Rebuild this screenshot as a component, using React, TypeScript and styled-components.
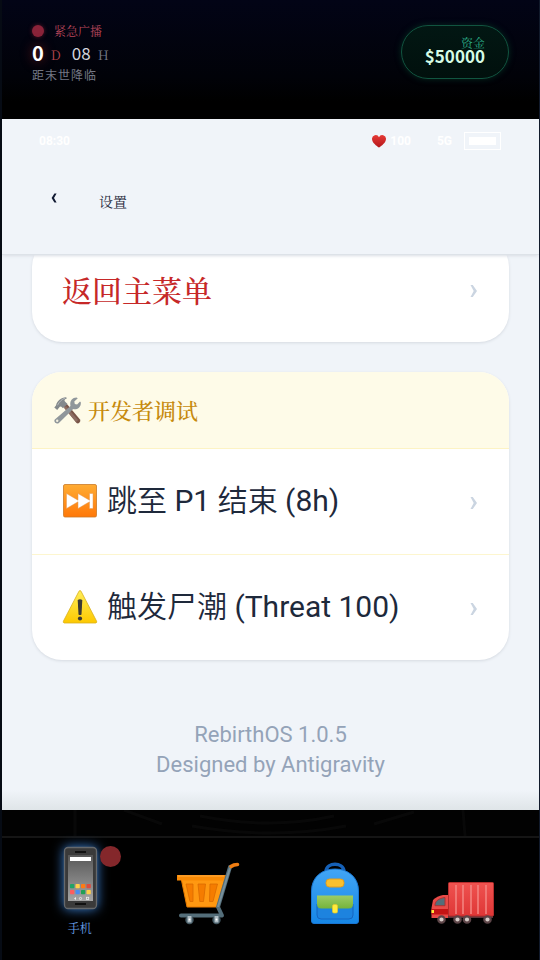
import React from 'react';
import styled, { createGlobalStyle } from 'styled-components';

const serif = '"Noto Serif CJK SC", "Noto Sans CJK SC", serif';
const sans = 'Roboto, "Noto Sans CJK SC DemiLight", "Noto Sans CJK SC", sans-serif';
const digits = '"Noto Sans CJK SC", sans-serif';

const GlobalStyle = createGlobalStyle`
  * { box-sizing: border-box; }
  body { margin: 0; background: #000; }
  button { font: inherit; color: inherit; border: 0; background: none; padding: 0; cursor: pointer; }
  svg { display: block; flex: none; }
`;

const Page = styled.div`
  display: flex;
  flex-direction: column;
  height: 100vh;
  border-left: 2px solid #060b14;
  border-right: 1px solid #111a2b;
  background: #000;
  font-family: ${sans};
`;

const TopBar = styled.header`
  display: flex;
  justify-content: space-between;
  align-items: flex-start;
  padding: 20px 30px 33px;
  background: linear-gradient(#020416, #010208 65%, #000 85%);
`;

const Countdown = styled.div`
  display: flex;
  flex-direction: column;
`;

const CountLine = styled.div`
  display: flex;
  align-items: center;
  height: 22px;
`;

const AlertDot = styled.span`
  width: 12px;
  height: 12px;
  margin-right: 10px;
  border-radius: 50%;
  background: #8a2339;
  box-shadow: 0 0 4px #5a1526;
`;

const AlertText = styled.span`
  font: 12px/22px ${serif};
  color: #b8465b;
`;

const Count = styled.span<{ $strong?: boolean }>`
  font: ${(p) => (p.$strong ? '700 20px' : '400 17px')}/22px ${digits};
  color: ${(p) => (p.$strong ? '#fff' : '#d3d5dc')};
  text-shadow: ${(p) => (p.$strong ? '0 0 12px #7f1d1d' : 'none')};
`;

const Unit = styled.span<{ $color: string }>`
  margin: 4px 11px 0 7px;
  font: 13px/18px ${serif};
  color: ${(p) => p.$color};
`;

const Caption = styled.span`
  font: 12px/22px ${digits};
  letter-spacing: 1px;
  color: #737884;
`;

const Funds = styled.div`
  display: flex;
  flex-direction: column;
  align-items: flex-end;
  justify-content: center;
  height: 54px;
  margin-top: 5px;
  padding: 0 23px 4px;
  border: 1px solid #115540;
  border-radius: 27px;
  background: linear-gradient(#021713, #01100d);
  box-shadow: 0 0 6px #05291f;
`;

const FundsLabel = styled.span`
  font: 12px/12px ${serif};
  color: #2bab85;
`;

const FundsValue = styled.span`
  font: 700 17px/14px ${digits};
  color: #d5fbe6;
`;

const Phone = styled.main`
  display: flex;
  flex-direction: column;
  flex: 1;
  min-height: 0;
  overflow: hidden;
  background: linear-gradient(transparent calc(100% - 20px), #dfe5e8), #f0f4f9;
`;

const StatusBar = styled.div`
  display: flex;
  align-items: center;
  height: 44px;
  padding: 0 38px 0 37px;
  font: 700 12px/16px ${sans};
  color: #fff;
`;

const Health = styled.span`
  display: flex;
  align-items: center;
  gap: 4px;
  margin-left: auto;
`;

const Network = styled.span`
  margin: 0 12px 0 26px;
`;

const Battery = styled.span`
  width: 37px;
  height: 18px;
  padding: 4px;
  border: 1px solid #fff;

  &::before {
    content: '';
    display: block;
    height: 8px;
    background: #fff;
  }
`;

const TitleBar = styled.div`
  display: flex;
  align-items: center;
  height: 92px;
  padding: 0 30px 15px;
  border-bottom: 1px solid #dde2e8;
  box-shadow: 0 2px 3px -1px #d9dee4;
  z-index: 1;
`;

const BackButton = styled.button`
  display: flex;
  justify-content: center;
  width: 44px;
  padding-bottom: 6px;
`;

const Title = styled.h1`
  margin: 0 0 0 23px;
  font: 400 14px/20px ${serif};
  color: #1e293b;
`;

const Content = styled.div`
  display: flex;
  flex: 1;
  flex-direction: column;
  justify-content: flex-end;
  gap: 30px;
  min-height: 0;
  overflow: hidden;
  padding: 0 30px;
`;

const Card = styled.section`
  flex: none;
  overflow: hidden;
  border-radius: 30px;
  background: #fff;
  box-shadow: 0 1px 3px #d5dae1;
`;

const DevHeading = styled.h2`
  display: flex;
  align-items: center;
  gap: 7px;
  height: 77px;
  margin: 0;
  padding: 0 22px;
  border-bottom: 1px solid #fdf3c4;
  background: #fefbe8;
  font: 500 22px/30px ${serif};
  color: #c68a0c;
`;

const Row = styled.button<{ $danger?: boolean }>`
  display: flex;
  align-items: center;
  gap: 9px;
  width: 100%;
  height: 105px;
  padding: 0 30px;
  font: ${(p) => (p.$danger ? 500 : 400)} 30px/44px ${(p) => (p.$danger ? serif : sans)};
  color: ${(p) => (p.$danger ? '#c62828' : '#1e293b')};
  text-align: left;

  & + & {
    height: 106px;
    border-top: 1px solid #fdf6cf;
  }
`;

const RowLabel = styled.span`
  flex: 1;
  padding-bottom: 2px;
`;

const About = styled.footer`
  flex: none;
  padding: 30px 0;
  font: 22px/30px ${sans};
  color: #94a3b8;
  text-align: center;

  p { margin: 0; }
`;

const Dock = styled.nav`
  display: grid;
  grid-template-columns: repeat(4, 1fr);
  height: 124px;
  padding: 8px 12px 0 14px;
  border-top: 2px solid #151515;
  background: #000;
`;

const Floor = styled.div`
  height: 26px;
  background: #020202;

  svg { width: 100%; height: 26px; }
`;

const DockItem = styled.button<{ $active?: boolean }>`
  display: flex;
  flex-direction: column;
  align-items: center;
  gap: 9px;
  padding-top: ${(p) => (p.$active ? '0' : '15px')};
  font: 12px/18px ${serif};
  color: #69a0e8;

  svg { filter: ${(p) => (p.$active ? 'drop-shadow(0 0 6px #3b82d6)' : 'none')}; }
`;

const IconWrap = styled.span`
  position: relative;
`;

const Badge = styled.span`
  position: absolute;
  top: 0;
  right: -9px;
  width: 21px;
  height: 21px;
  border-radius: 50%;
  background: #84272b;
`;

const Chevron = () => (
  <svg width="10" height="16" viewBox="0 0 10 16" aria-hidden="true">
    <path d="M1.500 3h2.300l4.200 6-4.200 6H1.500l3.200-6z" fill="#cbd5e1" />
  </svg>
);

const BackIcon = () => (
  <svg width="6" height="10" viewBox="0 0 6 10" aria-hidden="true">
    <path d="M3.400 0.500h2.200L3 5l2.600 4.500H3.400L.6 5z" fill="#111a33" />
  </svg>
);

const Heart = () => (
  <svg width="14" height="13" viewBox="0 0 14 13" aria-hidden="true">
    <defs>
      <linearGradient id="heart" x1="0" y1="0" x2="0" y2="1">
        <stop stopColor="#e53935" /><stop offset="1" stopColor="#b3161b" />
      </linearGradient>
    </defs>
    <path d="M7 12.600C4.700 11 0 7.700 0 4A3.700 3.700 0 0 1 7 2.200 3.700 3.700 0 0 1 14 4c0 3.700-4.700 7-7 8.600z" fill="url(#heart)" />
  </svg>
);

const Tools = () => (
  <svg width="27" height="27" viewBox="0 0 27 27" aria-hidden="true">
    <path d="M9.500 9.500l3-3L26 22.500q1 1.500-.5 3t-3 .5z" fill="#795548" />
    <path d="M12 9l12 14-2 2L10 11z" fill="#8d6e63" />
    <path d="M.8 22.500L16.500 9C15.500 5 17.500.8 22.500.6l1.300.7-3.500 3.200.5 2.500 2.300.6L26 4.500l.8.8c.6 4.700-3.800 7.800-7.600 6.800L4.600 26.200C2 27.500-.8 24.500.8 22.500z" fill="#90979b" />
    <circle cx="3.200" cy="23.800" r="1.200" fill="#f4f1df" />
    <path d="M.3 10.500L2 8.500c1-4.500 5-8 10-8.200l1 1C10.500 2 10 3.500 11 4.500l2.500 2.500-4.500 4.200-2-1.700-1.200.2-2.600 3.300z" fill="#84898c" />
    <path d="M3.500 8.300C5 5 8 2 11 1.200" fill="none" stroke="#b4b8ba" strokeWidth="1" />
  </svg>
);

const SkipIcon = () => (
  <svg width="36" height="36" viewBox="0 0 36 36" aria-hidden="true">
    <defs>
      <linearGradient id="skip" x1="0" y1="0" x2="0" y2="1">
        <stop stopColor="#ffac33" /><stop offset="1" stopColor="#ff7808" />
      </linearGradient>
    </defs>
    <rect x="1.500" y=".5" width="33" height="32.500" rx="1.500" fill="url(#skip)" stroke="#cc7a26" strokeWidth=".8" />
    <path d="M4.500 9.500l11.500 6.700v-6.700l11.500 6.700V9.500H31v15h-3.500v-6.700L16 24.500v-6.700L4.500 24.500z" fill="#fff" stroke="#e39a5a" strokeWidth=".5" />
  </svg>
);

const WarningIcon = () => (
  <svg width="36" height="36" viewBox="0 0 36 36" aria-hidden="true">
    <defs>
      <linearGradient id="warn" x1="0" y1="0" x2="0" y2="1">
        <stop stopColor="#ffee58" /><stop offset="1" stopColor="#fdc800" />
      </linearGradient>
    </defs>
    <path d="M17 1.200q1-1.400 2 0l15.600 30q.6 1.500-1 1.800H2.400q-1.600-.3-1-1.800z" fill="url(#warn)" stroke="#d9b01c" strokeWidth=".8" />
    <path d="M15.700 10q2.300-1.600 4.600 0l-.8 14.500q-1.500 1.200-3 0z" fill="#3b3835" />
    <circle cx="18" cy="28.500" r="2.100" fill="#3b3835" />
  </svg>
);

const appTiles = ['#21a366', '#ffd04a', '#ff7a14', '#dd4b3e', '#ff5d5d', '#4a8cf0', '#21a055', '#ffd04a'];

const PhoneIcon = () => (
  <svg width="64" height="64" viewBox="0 0 64 64" aria-hidden="true">
    <defs>
      <linearGradient id="screen" x1="0" y1="0" x2="0" y2="1">
        <stop stopColor="#575757" /><stop offset="1" stopColor="#a5a5a5" />
      </linearGradient>
    </defs>
    <rect x="16.500" y="1.500" width="32" height="61" rx="3.500" fill="#3a3a3a" stroke="#66696c" strokeWidth="1.300" />
    <rect x="27" y="5" width="11" height="2" fill="#111" />
    <rect x="27" y="57" width="11" height="2" fill="#111" />
    <rect x="20" y="9" width="25" height="46" fill="url(#screen)" />
    <rect x="22" y="11" width="21" height="4" fill="#fff" />
    {appTiles.map((fill, i) => (
      <rect key={i} x={22 + (i % 4) * 5.500} y={i < 4 ? 38 : 44} width="4.300" height="4.300" rx=".8" fill={fill} />
    ))}
    <path d="M28 51v3l-2-1.500z" fill="#eee" />
    <circle cx="32.500" cy="52.500" r="1.100" fill="none" stroke="#eee" strokeWidth=".8" />
    <rect x="38.500" y="51.300" width="2.200" height="2.200" fill="none" stroke="#eee" strokeWidth=".8" />
  </svg>
);

const CartIcon = () => (
  <svg width="64" height="64" viewBox="0 0 64 64" aria-hidden="true">
    <path d="M5 17h44l-8 29H11z" fill="#ff9811" stroke="#e87a00" />
    <path d="M1 14h50l-1 5.500H1z" fill="#f98a05" />
    <path d="M2 15h46" stroke="#ffab40" />
    <path d="M10 23h7v17.500h-3zM22 23h7.500l-2 17.500h-3.700zM34 23h7.500L37 40.500h-3.500z" fill="#f57c00" stroke="#d96b00" strokeWidth=".8" />
    <path d="M54 6L42 46l4 8.500H5" fill="none" stroke="#546e7a" strokeWidth="4" strokeLinejoin="round" strokeLinecap="round" />
    <path d="M54 7L42 46" stroke="#78909c" strokeWidth="2" />
    <path d="M55 5.500c2-1.500 4-2 6.500-2" fill="none" stroke="#ef7d12" strokeWidth="3.600" strokeLinecap="round" />
    {[13.500, 40.500].map((x) => (
      <g key={x}>
        <circle cx={x} cy="59" r="4.200" fill="#455a64" />
        <rect x={x - 2} y="55" width="4" height="6.500" fill="#b0bec5" />
        <circle cx={x} cy="58.500" r="1" fill="#fff" />
      </g>
    ))}
  </svg>
);

const BagIcon = () => (
  <svg width="64" height="64" viewBox="0 0 64 64" aria-hidden="true">
    <defs>
      <linearGradient id="bag" x1="0" y1="0" x2="0" y2="1">
        <stop stopColor="#42a5f5" /><stop offset="1" stopColor="#1687e7" />
      </linearGradient>
      <linearGradient id="flap" x1="0" y1="0" x2="0" y2="1">
        <stop stopColor="#9ccc65" /><stop offset="1" stopColor="#76b43c" />
      </linearGradient>
    </defs>
    <path d="M23 10c1-9 17-9 18 0" fill="none" stroke="#1560b7" strokeWidth="3.500" />
    <path d="M8.500 30C8.500 16 19 8 32 8s23.500 8 23.500 22v30q0 2.500-2.500 2.500H11q-2.500 0-2.500-2.500z" fill="url(#bag)" stroke="#1976d2" />
    <rect x="23" y="18" width="18" height="8" rx="3.500" fill="#fbc02d" stroke="#df9d20" />
    <path d="M14 43h36v11q0 4-4 4H18q-4 0-4-4z" fill="#1d83df" stroke="#1565c0" />
    <path d="M14 34.500h36V43q0 4.500-4.500 4.500h-27Q14 47.500 14 43z" fill="url(#flap)" />
    <rect x="29.500" y="43.500" width="5" height="8.500" rx="1.500" fill="#ffeb3b" stroke="#e5c52b" strokeWidth=".7" />
  </svg>
);

const TruckIcon = () => (
  <svg width="64" height="64" viewBox="0 0 64 64" aria-hidden="true">
    <defs>
      <linearGradient id="box" x1="0" y1="0" x2="0" y2="1">
        <stop stopColor="#ef5350" /><stop offset="1" stopColor="#df3636" />
      </linearGradient>
    </defs>
    <path d="M4 54h58v3H4z" fill="#5d3439" />
    <rect x="17.500" y="21.500" width="45" height="33.500" rx="1" fill="url(#box)" stroke="#b52d2d" />
    <path d="M25 24v29M32 24v29M40 24v29M47 24v29M55 24v29" stroke="#f48683" strokeWidth="1.500" />
    <path d="M17 34h-5Q6 35 2 39L.5 47v10H17z" fill="#e94a47" />
    <path d="M14 36.500v8.200H4c-.5-4 3.500-7.500 10-8.200z" fill="#546e7a" stroke="#a83434" />
    <path d="M.5 48H17v5.500H.5z" fill="#c41414" />
    <rect x=".5" y="49" width="2.500" height="3" fill="#ffeb3b" />
    {[10.500, 26.500, 36, 56.500].map((x) => (
      <circle key={x} cx={x} cy="58.500" r="3.200" fill="#d7ccc8" stroke="#5d4548" strokeWidth="2.200" />
    ))}
  </svg>
);

const devActions = [
  { icon: <SkipIcon />, label: '跳至 P1 结束 (8h)' },
  { icon: <WarningIcon />, label: '触发尸潮 (Threat 100)' },
];

const dockItems = [
  { name: '商城', icon: <CartIcon /> },
  { name: '背包', icon: <BagIcon /> },
  { name: '货车', icon: <TruckIcon /> },
];

export default function App() {
  return (
    <Page>
      <GlobalStyle />
      <TopBar>
        <Countdown>
          <CountLine><AlertDot /><AlertText>紧急广播</AlertText></CountLine>
          <CountLine>
            <Count $strong>0</Count><Unit $color="#b0434a">D</Unit>
            <Count>08</Count><Unit $color="#737884">H</Unit>
          </CountLine>
          <Caption>距末世降临</Caption>
        </Countdown>
        <Funds>
          <FundsLabel>资金</FundsLabel>
          <FundsValue>$50000</FundsValue>
        </Funds>
      </TopBar>

      <Phone>
        <StatusBar>
          <span>08:30</span>
          <Health><Heart />100</Health>
          <Network>5G</Network>
          <Battery />
        </StatusBar>
        <TitleBar>
          <BackButton aria-label="返回"><BackIcon /></BackButton>
          <Title>设置</Title>
        </TitleBar>
        <Content>
          <Card>
            <Row $danger><RowLabel>返回主菜单</RowLabel><Chevron /></Row>
          </Card>
          <Card>
            <DevHeading><Tools />开发者调试</DevHeading>
            {devActions.map((a) => (
              <Row key={a.label}>{a.icon}<RowLabel>{a.label}</RowLabel><Chevron /></Row>
            ))}
          </Card>
          <About>
            <p>RebirthOS 1.0.5</p>
            <p>Designed by Antigravity</p>
          </About>
        </Content>
      </Phone>

      <Floor>
        <svg viewBox="0 0 537 26" preserveAspectRatio="none" aria-hidden="true">
          <path d="M198 6q70 14 134 0M190 16q80 14 154 0M73 0v26M461 0l2 26M372 14l40-12M122 0l38 14" fill="none" stroke="#080808" strokeWidth="3" />
        </svg>
      </Floor>
      <Dock>
        <DockItem $active>
          <IconWrap><PhoneIcon /><Badge /></IconWrap>
          手机
        </DockItem>
        {dockItems.map((d) => (
          <DockItem key={d.name} aria-label={d.name}>{d.icon}</DockItem>
        ))}
      </Dock>
    </Page>
  );
}
